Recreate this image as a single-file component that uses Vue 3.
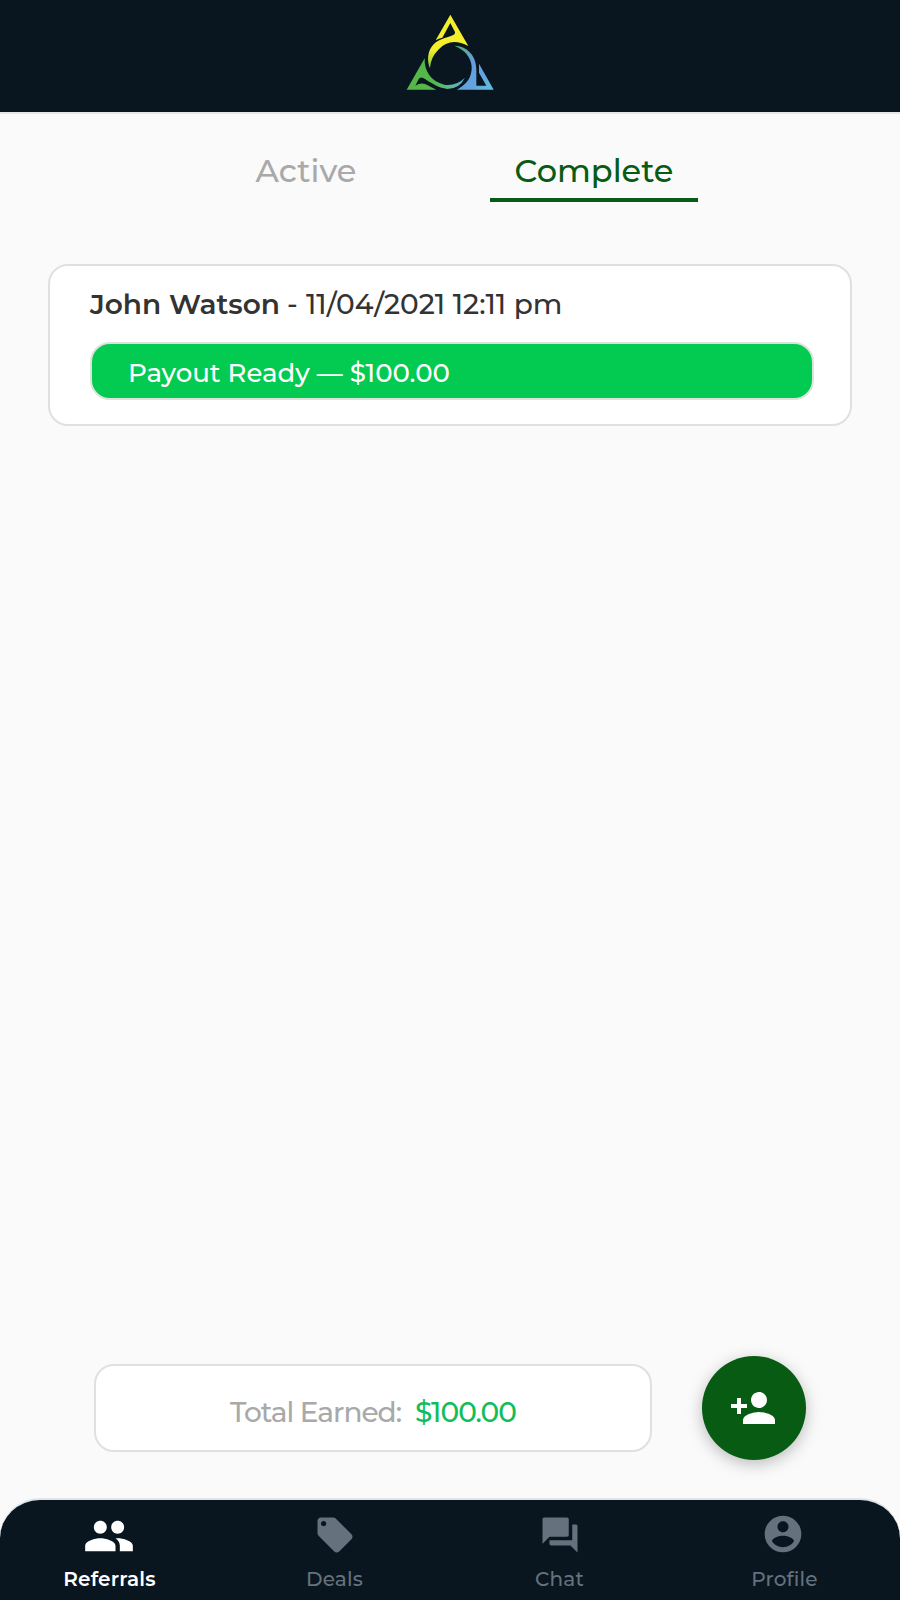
<template>
  <div class="app">
    <header class="header">
      <svg class="logo" viewBox="0 0 360 336" width="120" height="112">
        <defs>
          <linearGradient id="gradYellow" x1="0" y1="0" x2="0" y2="1">
            <stop offset="0.65" stop-color="#f5ee2c" />
            <stop offset="1" stop-color="#7cc242" />
          </linearGradient>
          <linearGradient id="gradGreen" x1="0" y1="0" x2="1" y2="0">
            <stop offset="0.45" stop-color="#53b848" />
            <stop offset="0.75" stop-color="#5db896" />
            <stop offset="1" stop-color="#62a8dc" />
          </linearGradient>
          <linearGradient id="gradBlue" x1="0" y1="0" x2="1" y2="1">
            <stop offset="0" stop-color="#56b060" />
            <stop offset="0.4" stop-color="#629ddd" />
            <stop offset="0.7" stop-color="#63a4e0" />
            <stop offset="1" stop-color="#5cc3dc" />
          </linearGradient>
        </defs>
        <path
          fill="url(#gradYellow)"
          d="M181 44L235 138Q181 110 145 149Q121 173 120 205C104 164 124 128 155 118C174 108 197 109 195 96L181 69L157 113Q146 115 137 121Z"
        />
        <path
          fill="url(#gradGreen)"
          d="M104 175L50 269H139L107 253Q92 246 76 257L86 237Q91 229 101 235C120 247 145 264 172 267Q209 266 225 233Q198 259 163 254C123 245 102 213 104 175Z"
        />
        <path
          fill="url(#gradBlue)"
          d="M193 137C230 138 259 165 259 209V257H289L267 218V191L311 269H201C234 251 246 229 245 199Q240 156 193 137Z"
        />
      </svg>
    </header>

    <div class="tabs">
      <button
        v-for="tab in tabs"
        :key="tab"
        class="tab"
        :class="{ selected: tab === activeTab }"
        @click="activeTab = tab"
      >
        {{ tab }}
      </button>
    </div>

    <main class="content">
      <div v-for="referral in referrals" :key="referral.name" class="card">
        <div class="card-title">
          <strong>{{ referral.name }}</strong>
          <span class="dash">-</span>
          <span class="date">{{ referral.date }}</span>
        </div>
        <div class="status">{{ referral.status }}</div>
      </div>
    </main>

    <div class="actions">
      <div class="total">
        <span class="total-label">Total Earned:</span>
        <span class="total-amount">$100.00</span>
      </div>
      <button class="fab" aria-label="Add referral">
        <svg viewBox="0 0 24 24" width="48" height="48">
          <path
            fill="#fff"
            d="M15 12c2.21 0 4-1.79 4-4s-1.79-4-4-4-4 1.79-4 4 1.79 4 4 4zm-9-2V7H4v3H1v2h3v3h2v-3h3v-2H6zm9 4c-2.67 0-8 1.34-8 4v2h16v-2c0-2.66-5.33-4-8-4z"
          />
        </svg>
      </button>
    </div>

    <nav class="nav">
      <a
        v-for="item in navItems"
        :key="item.label"
        class="nav-item"
        :class="{ current: item.label === 'Referrals' }"
      >
        <span class="nav-icon">
          <svg viewBox="0 0 24 24" :width="item.size" :height="item.size">
            <path fill="currentColor" :d="item.icon" />
          </svg>
        </span>
        <span class="nav-label">{{ item.label }}</span>
      </a>
    </nav>
  </div>
</template>

<script setup>
import { ref } from 'vue'

const tabs = ['Active', 'Complete']
const activeTab = ref('Complete')

const referrals = [
  { name: 'John Watson', date: '11/04/2021 12:11 pm', status: 'Payout Ready — $100.00' }
]

const navItems = [
  {
    label: 'Referrals',
    size: 52,
    icon: 'M16 11c1.66 0 2.99-1.34 2.99-3S17.66 5 16 5c-1.66 0-3 1.34-3 3s1.34 3 3 3zm-8 0c1.66 0 2.99-1.34 2.99-3S9.66 5 8 5C6.34 5 5 6.34 5 8s1.34 3 3 3zm0 2c-2.33 0-7 1.17-7 3.5V19h14v-2.5c0-2.33-4.67-3.5-7-3.5zm8 0c-.29 0-.62.02-.97.05 1.16.84 1.97 1.97 1.97 3.45V19h6v-2.5c0-2.33-4.67-3.5-7-3.5z'
  },
  {
    label: 'Deals',
    size: 42,
    icon: 'M21.41 11.58l-9-9C12.05 2.22 11.55 2 11 2H4c-1.1 0-2 .9-2 2v7c0 .55.22 1.05.59 1.42l9 9c.36.36.86.58 1.41.58.55 0 1.05-.22 1.41-.59l7-7c.37-.36.59-.86.59-1.41 0-.55-.23-1.06-.59-1.42zM5.5 7C4.67 7 4 6.33 4 5.5S4.67 4 5.5 4 7 4.67 7 5.5 6.33 7 5.5 7z'
  },
  {
    label: 'Chat',
    size: 42,
    icon: 'M21 6h-2v9H6v2c0 .55.45 1 1 1h11l4 4V7c0-.55-.45-1-1-1zm-4 6V3c0-.55-.45-1-1-1H3c-.55 0-1 .45-1 1v14l4-4h10c.55 0 1-.45 1-1z'
  },
  {
    label: 'Profile',
    size: 44,
    icon: 'M12 2C6.48 2 2 6.48 2 12s4.48 10 10 10 10-4.48 10-10S17.52 2 12 2zm0 3c1.66 0 3 1.34 3 3s-1.34 3-3 3-3-1.34-3-3 1.34-3 3-3zm0 14.2c-2.5 0-4.71-1.28-6-3.22.03-1.99 4-3.08 6-3.08 1.99 0 5.97 1.09 6 3.08-1.29 1.94-3.5 3.22-6 3.22z'
  }
]
</script>

<style>
body {
  margin: 0;
  background: #fafafa;
}
</style>

<style scoped>
.app {
  display: flex;
  flex-direction: column;
  height: 1600px;
  background: #fafafa;
  font-family: Montserrat, Inter, "Liberation Sans", sans-serif;
  font-weight: 500;
  color: #333;
  overflow: hidden;
}

.app * {
  box-sizing: border-box;
}

button {
  padding: 0;
  border: none;
  background: none;
  font-family: inherit;
  cursor: pointer;
}

.header {
  display: flex;
  justify-content: center;
  height: 114px;
  background: #091620;
  border-bottom: 2px solid #e6e6e6;
}

.logo {
  display: block;
}

.tabs {
  display: flex;
  justify-content: center;
  gap: 80px;
  height: 88px;
}

.tab {
  width: 208px;
  padding-top: 30px;
  border-bottom: 4px solid transparent;
  color: #a9a9a9;
  font-size: 32px;
  line-height: 40px;
  font-weight: 500;
  white-space: nowrap;
}

.tab.selected {
  border-color: #075b14;
  color: #075b14;
}

.content {
  flex: 1;
  padding: 62px 48px 0;
}

.card {
  height: 162px;
  padding: 20px 36px 0 40px;
  border: 2px solid #e0e0e0;
  border-radius: 20px;
  background: #fff;
}

.card-title {
  display: flex;
  height: 56px;
  font-size: 28px;
  line-height: 36px;
  white-space: nowrap;
}

.card-title strong {
  width: 197px;
  font-weight: 600;
}

.dash {
  width: 19px;
}

.status {
  height: 58px;
  padding-left: 36px;
  border: 2px solid #dce3dc;
  border-radius: 20px;
  background: #03ca51;
  color: #fff;
  font-size: 26px;
  line-height: 58px;
  white-space: nowrap;
}

.actions {
  display: flex;
  align-items: center;
  gap: 50px;
  height: 104px;
  margin: 0 94px 38px;
}

.total {
  display: flex;
  width: 558px;
  height: 88px;
  padding-left: 134px;
  border: 2px solid #e0e0e0;
  border-radius: 20px;
  background: #fff;
  font-size: 28px;
  line-height: 92px;
  letter-spacing: -1px;
  white-space: nowrap;
}

.total-label {
  width: 185px;
  color: #a9a9a9;
}

.total-amount {
  color: #12bd59;
}

.fab {
  display: flex;
  align-items: center;
  justify-content: center;
  width: 104px;
  height: 104px;
  padding-right: 2px;
  border-radius: 50%;
  background: #075b12;
  box-shadow: 0 4px 16px rgba(0, 0, 0, 0.25);
}

.nav {
  display: flex;
  height: 102px;
  border-top: 2px solid #dfe5e8;
  border-radius: 40px 40px 0 0;
  background: #091620;
}

.nav-item {
  display: flex;
  flex-direction: column;
  align-items: center;
  width: 225px;
  padding-right: 6px;
  color: #65717d;
}

.nav-item.current {
  color: #fff;
}

.nav-icon {
  display: flex;
  align-items: center;
  height: 69px;
}

.nav-item.current .nav-icon {
  height: 72px;
  margin-bottom: -3px;
  padding-right: 1px;
}

.nav-item:last-child .nav-icon {
  height: 68px;
  margin-bottom: 1px;
  padding-right: 3px;
}

.nav-label {
  font-size: 20px;
  line-height: 20px;
  letter-spacing: 0.2px;
}

.current .nav-label {
  font-weight: 600;
}
</style>
